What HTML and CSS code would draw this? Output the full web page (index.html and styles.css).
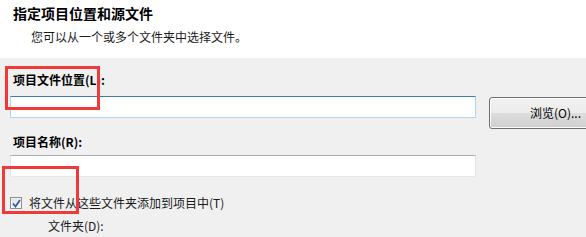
FILE: index.html
```html
<!DOCTYPE html>
<html lang="zh-CN">
<head>
    <meta charset="UTF-8">
    <title>指定项目位置和源文件</title>
    <link rel="stylesheet" href="styles.css">
</head>
<body>
    <div class="header">
        <div class="title">指定项目位置和源文件</div>
        <div class="subtitle">您可以从一个或多个文件夹中选择文件。</div>
    </div>

    <div class="main">
        <div class="label">项目文件位置(L):</div>
        <div class="field-row">
            <div class="textbox focused"></div>
            <div class="button">浏览(O)...</div>
        </div>

        <div class="label label-name">项目名称(R):</div>
        <div class="textbox"></div>

        <div class="check-row">
            <span class="checkbox">
                <svg width="9" height="9" viewBox="0 0 9 9">
                    <path d="M1 4.5 L3.5 7.5 L8 1" fill="none" stroke="#3a58a8" stroke-width="1.8"/>
                </svg>
            </span>
            <span>将文件从这些文件夹添加到项目中(T)</span>
        </div>
        <div class="folder-label">文件夹(D):</div>
    </div>

    <!-- 标注框 -->
    <div class="mark mark-1"></div>
    <div class="mark mark-2"></div>
</body>
</html>
```

FILE: styles.css
```css
* {
    box-sizing: border-box;
    margin: 0;
    padding: 0;
}

body {
    font-family: "Noto Sans CJK SC", "Liberation Sans", sans-serif;
    font-size: 12px;
    color: #1a1a1a;
    background: #f0f0f0;
    width: 586px;
    height: 237px;
    overflow: hidden;
    position: relative;
}

.header {
    background: #fff;
    height: 58px;
    padding: 5px 13px 0;
}

.title {
    font-size: 14px;
    font-weight: 700;
    line-height: 16px;
    color: #000;
}

.subtitle {
    margin-top: 9px;
    padding-left: 18px;
    line-height: 14px;
}

.main {
    padding: 15px 0 0 10px;
}

.label {
    font-weight: 700;
    line-height: 14px;
    padding-left: 3px;
    color: #000;
}

.field-row {
    display: flex;
    align-items: flex-start;
    margin-top: 9px;
}

.textbox {
    flex: none;
    width: 466px;
    height: 22px;
    background: #fff;
    border: 1px solid #e2e3ea;
    border-top-color: #abadb3;
    border-bottom-color: #e3e9ef;
}

.textbox.focused {
    border-color: #b5d3ee;
    border-top-color: #3d7bad;
}

.button {
    flex: none;
    margin-left: 13px;
    margin-top: 1px;
    width: 110px;
    height: 32px;
    border: 1px solid #707070;
    border-radius: 3px;
    background: linear-gradient(#f2f2f2 0%, #ebebeb 50%, #dddddd 51%, #cfcfcf 100%);
    box-shadow: inset 0 0 0 1px #fcfcfc;
    line-height: 30px;
    padding-left: 40px;
    color: #000;
}

.label-name {
    margin-top: 6px;
}

.label-name + .textbox {
    margin-top: 6px;
}

.check-row {
    display: flex;
    align-items: center;
    gap: 7px;
    margin-top: 19px;
    line-height: 14px;
}

.checkbox {
    width: 12px;
    height: 12px;
    border: 1px solid #8e8f8f;
    background: linear-gradient(135deg, #dcdcdc, #fdfdfd);
    box-shadow: inset 0 0 0 1px #f4f4f4;
    display: flex;
    align-items: center;
    justify-content: center;
}

.folder-label {
    margin-top: 9px;
    padding-left: 38px;
    line-height: 14px;
}

/* 标注框 */
.mark {
    position: absolute;
    border: 3px solid #f03a3a;
}

.mark-1 {
    left: 5px;
    top: 66px;
    width: 95px;
    height: 44px;
}

.mark-2 {
    left: 2px;
    top: 166px;
    width: 77px;
    height: 48px;
}
```
